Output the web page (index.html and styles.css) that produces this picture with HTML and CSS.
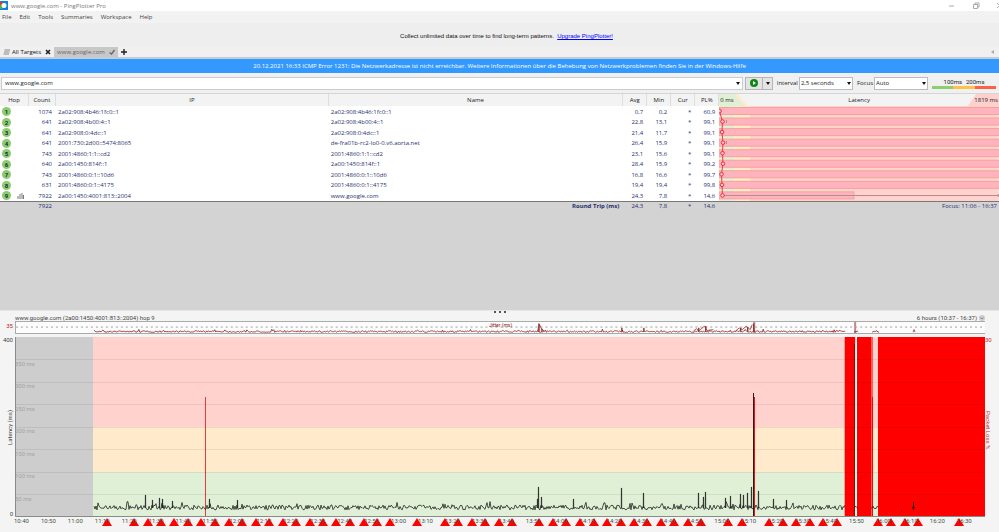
FILE: index.html
```html
<!DOCTYPE html>
<html lang="en">

<head>
	<meta charset="UTF-8">
	<meta name="viewport" content="width=device-width, initial-scale=1.0">
	<title>www.google.com - PingPlotter Pro</title>
	<link rel="stylesheet" href="styles.css">
</head>

<body>
	<header class="titlebar">
		<svg class="app-icon" viewBox="0 0 8 9">
			<rect width="8" height="9" fill="#0f83d8"/>
			<circle cx="1" cy="3" r="2" fill="#e33b2e"/>
			<circle cx="1" cy="6" r="2" fill="#43b649"/>
			<circle cx="4" cy="4.5" r="2.5" fill="#fff"/>
		</svg>
		<span class="window-title">www.google.com - PingPlotter Pro</span>
		<button class="win-btn" aria-label="Minimize"><svg viewBox="0 0 8 8"><path d="M1 4h5"/></svg></button>
		<button class="win-btn" aria-label="Restore"><svg viewBox="0 0 8 8"><path d="M1.5 2.5h4v4h-4zM3 2.5V1h4v4H5.5"/></svg></button>
		<button class="win-btn" aria-label="Close"><svg viewBox="0 0 8 8"><path d="M1 1l5 5M6 1L1 6"/></svg></button>
	</header>

	<nav class="menu">
		<a href="#">File</a>
		<a href="#">Edit</a>
		<a href="#">Tools</a>
		<a href="#">Summaries</a>
		<a href="#">Workspace</a>
		<a href="#">Help</a>
	</nav>

	<div class="promo">Collect unlimited data over time to find long-term patterns.&nbsp; <a href="#">Upgrade PingPlotter!</a></div>

	<div class="tabs">
		<button class="tab">
			<svg class="list-icon" viewBox="0 0 7 6"><path d="M1.5 1H7M1 3h5.5M.5 5H6"/></svg>
			All Targets
			<svg class="tab-mark" viewBox="0 0 6 6"><path d="M1 1l4 4M5 1L1 5"/></svg>
		</button>
		<button class="tab active">
			www.google.com
			<svg class="tab-mark" viewBox="0 0 6 6"><path d="M.5 3.5L2.5 5 5.5 1"/></svg>
		</button>
		<button class="tab-add" aria-label="New tab"><svg viewBox="0 0 6 6"><path d="M3 0v6M0 3h6"/></svg></button>
		<button class="tab-scroll" aria-label="Scroll tabs"><svg viewBox="0 0 3 4"><path d="M3 0v4L0 2z"/></svg></button>
	</div>

	<div class="alert">20.12.2021 16:33 ICMP Error 1231: Die Netzwerkadresse ist nicht erreichbar. Weitere Informationen über die Behebung von Netzwerkproblemen finden Sie in der Windows-Hilfe</div>

	<form class="toolbar">
		<div class="target combo">
			<input type="text" aria-label="Target" value="www.google.com">
		</div>
		<div class="trace-btns">
			<button type="button" class="play" aria-label="Start trace">
				<svg viewBox="0 0 8 8"><circle cx="4" cy="4" r="4" fill="#098a12"/><path d="M3 2l3 2-3 2z" fill="#fff"/></svg>
			</button>
			<button type="button" class="play-more combo" aria-label="Trace options"></button>
		</div>
		<label for="interval">Interval</label>
		<div class="combo">
			<select id="interval">
				<option>2,5 seconds</option>
			</select>
		</div>
		<label for="focus">Focus</label>
		<div class="combo">
			<select id="focus">
				<option>Auto</option>
			</select>
		</div>
		<div class="legend">
			<div class="legend-text"><span>100ms</span><span>200ms</span></div>
			<div class="legend-bar"></div>
		</div>
	</form>

	<main class="trace">
		<table>
			<colgroup>
				<col class="c-hop">
				<col class="c-count">
				<col class="c-ip">
				<col class="c-name">
				<col class="c-num">
				<col class="c-num">
				<col class="c-num">
				<col class="c-num">
				<col class="c-latency">
			</colgroup>
			<thead>
				<tr>
					<th>Hop</th>
					<th>Count</th>
					<th>IP</th>
					<th>Name</th>
					<th>Avg</th>
					<th>Min</th>
					<th>Cur</th>
					<th>PL%</th>
					<th class="latency-head">
						<div class="scale">
							<span class="scale-min">0 ms</span>
							<span>Latency</span>
							<span class="scale-max">1819 ms</span>
						</div>
					</th>
				</tr>
			</thead>
			<tbody>
				<tr>
					<td><span class="hop">1</span></td><td class="num">1074</td><td>2a02:908:4b46:1fc0::1</td><td>2a02:908:4b46:1fc0::1</td>
					<td class="num">0,7</td><td class="num">0,2</td><td class="num">*</td><td class="num">60,9</td>
					<td class="latency" rowspan="9">
						<svg id="hopGraph" viewBox="0 0 280 95" preserveAspectRatio="none"></svg>
					</td>
				</tr>
				<tr>
					<td><span class="hop">2</span></td><td class="num">641</td><td>2a02:908:4b00:4::1</td><td>2a02:908:4b00:4::1</td>
					<td class="num">22,8</td><td class="num">13,1</td><td class="num">*</td><td class="num">99,1</td>
				</tr>
				<tr>
					<td><span class="hop">3</span></td><td class="num">641</td><td>2a02:908:0:4dc::1</td><td>2a02:908:0:4dc::1</td>
					<td class="num">21,4</td><td class="num">11,7</td><td class="num">*</td><td class="num">99,1</td>
				</tr>
				<tr>
					<td><span class="hop">4</span></td><td class="num">641</td><td>2001:730:2d00::5474:8065</td><td>de-fra01b-rc2-lo0-0.v6.aorta.net</td>
					<td class="num">26,4</td><td class="num">15,9</td><td class="num">*</td><td class="num">99,1</td>
				</tr>
				<tr>
					<td><span class="hop">5</span></td><td class="num">743</td><td>2001:4860:1:1::cd2</td><td>2001:4860:1:1::cd2</td>
					<td class="num">23,1</td><td class="num">15,6</td><td class="num">*</td><td class="num">99,1</td>
				</tr>
				<tr>
					<td><span class="hop">6</span></td><td class="num">640</td><td>2a00:1450:814f::1</td><td>2a00:1450:814f::1</td>
					<td class="num">28,4</td><td class="num">15,9</td><td class="num">*</td><td class="num">99,2</td>
				</tr>
				<tr>
					<td><span class="hop">7</span></td><td class="num">743</td><td>2001:4860:0:1::10d6</td><td>2001:4860:0:1::10d6</td>
					<td class="num">16,8</td><td class="num">16,6</td><td class="num">*</td><td class="num">99,7</td>
				</tr>
				<tr>
					<td><span class="hop">8</span></td><td class="num">631</td><td>2001:4860:0:1::4175</td><td>2001:4860:0:1::4175</td>
					<td class="num">19,4</td><td class="num">19,4</td><td class="num">*</td><td class="num">99,8</td>
				</tr>
				<tr>
					<td>
						<div class="hop-cell">
							<span class="hop">9</span>
							<svg class="bars-icon" viewBox="0 0 7 6"><path d="M1 3v3M3 1v5M5 0v6M6.5 2v4"/></svg>
						</div>
					</td>
					<td class="num">7922</td><td>2a00:1450:4001:813::2004</td><td>www.google.com</td>
					<td class="num">24,3</td><td class="num">7,8</td><td class="num">*</td><td class="num">14,6</td>
				</tr>
			</tbody>
			<tfoot>
				<tr>
					<td></td><td class="num">7922</td><td></td><td class="num round-trip">Round Trip (ms)</td>
					<td class="num">24,3</td><td class="num">7,8</td><td class="num">*</td><td class="num">14,6</td>
					<td class="focus-range">Focus: 11:06 - 16:37</td>
				</tr>
			</tfoot>
		</table>
	</main>

	<section class="graph">
		<div class="grip"><i></i><i></i><i></i></div>
		<div class="graph-title">
			<span>www.google.com (2a00:1450:4001:813::2004) hop 9</span>
			<button class="range">6 hours (10:37 - 16:37)
				<svg viewBox="0 0 6 6"><circle cx="3" cy="3" r="3" fill="#ccc"/><path d="M1.5 2.5L3 4l1.5-1.5" fill="none" stroke="#777" stroke-width=".8"/></svg>
			</button>
		</div>
		<div class="jitter-max">35</div>
		<div class="jitter">
			<svg id="jitterGraph" viewBox="0 0 970 13" preserveAspectRatio="none"></svg>
			<span class="jitter-label">Jitter (ms)</span>
		</div>
		<div class="axis axis-left">
			<span>400</span>
			<span class="axis-name">Latency (ms)</span>
			<span>0</span>
		</div>
		<div class="plot">
			<svg id="latencyGraph" viewBox="0 0 970 180" preserveAspectRatio="none"></svg>
			<div class="grid-labels">
				<span></span>
				<span>350 ms</span>
				<span>300 ms</span>
				<span>250 ms</span>
				<span>200 ms</span>
				<span>150 ms</span>
				<span>100 ms</span>
				<span>50 ms</span>
			</div>
		</div>
		<div class="axis axis-right">
			<span>30</span>
			<span class="axis-name">Packet Loss %</span>
			<span></span>
		</div>
		<div class="timeline">
			<svg id="markers" viewBox="0 0 970 10" preserveAspectRatio="none"></svg>
			<div class="times" id="times"></div>
		</div>
	</section>

	<script src="script.js"></script>
</body>

</html>
```

FILE: styles.css
```css
* {
	box-sizing: border-box;
}

body {
	margin: 0;
	height: 100vh;
	display: flex;
	flex-direction: column;
	overflow: hidden;
	font-family: 'Open Sans', 'Noto Sans', sans-serif;
	font-size: 6px;
	line-height: 10px;
	color: #222;
	background: #f0f0f0;
}

button,
input,
select {
	font: inherit;
	color: inherit;
	margin: 0;
	padding: 0;
	border: none;
	border-radius: 0;
	background: none;
	outline: none;
}

svg {
	display: block;
}

/* title bar and menu */
.titlebar {
	display: flex;
	align-items: center;
	height: 11px;
	background: #fff;
	color: #777;
}

.app-icon {
	width: 8px;
	height: 9px;
}

.window-title {
	flex: 1;
	padding-left: 3px;
}

.win-btn {
	width: 8px;
	height: 8px;
	margin-left: 16px;
}

.win-btn:last-child {
	margin-right: -5px;
}

.win-btn svg {
	width: 8px;
	height: 8px;
	fill: none;
	stroke: #aaa;
}

.menu {
	display: flex;
	gap: 8px;
	height: 12px;
	padding: 1px 2px;
	background: #f2f2f2;
}

.menu a {
	color: #444;
	text-decoration: none;
}

.promo {
	height: 23px;
	line-height: 26px;
	padding-left: 14px;
	text-align: center;
	font-family: 'Liberation Sans', Arial, sans-serif;
	color: #111;
	background: #eee;
}

.promo a {
	color: #00f;
}

/* tabs */
.tabs {
	display: flex;
	height: 13px;
	padding-top: 1px;
	border-bottom: 2px solid #c3cbd3;
}

.tab {
	display: flex;
	align-items: center;
	gap: 4px;
	padding: 0 3px;
	color: #111;
}

.tab.active {
	padding: 0 3px;
	color: #666;
	background: #c8c8c8;
}

.list-icon {
	width: 7px;
	height: 6px;
	margin-right: -2px;
	stroke: #888;
}

.tab-mark {
	width: 6px;
	height: 6px;
	fill: none;
	stroke: #222;
	stroke-width: 1.6;
}

.active .tab-mark {
	stroke: #666;
	stroke-width: 1.3;
}

.tab-add {
	padding-left: 3px;
}

.tab-add svg {
	width: 6px;
	height: 6px;
	stroke: #222;
	stroke-width: 1.4;
}

.tab-scroll {
	margin-left: auto;
	padding-right: 5px;
}

.tab-scroll svg {
	width: 3px;
	height: 4px;
	fill: #aaa;
}

.alert {
	height: 14px;
	line-height: 14px;
	text-align: center;
	color: #fff;
	background: #3399ff;
}

/* toolbar */
.toolbar {
	display: flex;
	align-items: center;
	height: 21px;
	padding: 0 3px 0 1px;
	border-bottom: 1px solid #d5d5d5;
}

.combo {
	position: relative;
}

.combo::after {
	content: '';
	position: absolute;
	right: 3px;
	top: 5px;
	border: 2px solid transparent;
	border-top: 3px solid #111;
	border-bottom: none;
	pointer-events: none;
}

.target {
	flex: 1;
}

.target input {
	display: block;
	width: 100%;
	height: 13px;
	padding: 0 3px;
	border: 1px solid #c9cdd2;
	background: #fff;
}

.trace-btns {
	display: flex;
	margin: 0 4px 0 2px;
	border: 1px solid #b5b5b5;
	background: #e4e4e4;
}

.play {
	width: 16px;
	height: 11px;
	padding: 0 4px;
}

.play svg {
	width: 8px;
	height: 8px;
}

.play-more {
	width: 10px;
	border-left: 1px solid #b5b5b5;
}

.play-more::after {
	right: 2px;
	top: 4px;
}

.toolbar select {
	display: block;
	appearance: none;
	width: 54px;
	height: 13px;
	margin: 0 4px 0 1px;
	padding: 0 1px;
	border: 1px solid #b9bdc2;
	background: #fff;
}

.toolbar label + .combo::after {
	right: 6px;
}

.legend {
	width: 64px;
	font-family: Roboto, sans-serif;
}

.legend-text {
	display: flex;
	justify-content: center;
	gap: 4px;
	line-height: 8px;
}

.legend-bar {
	height: 3px;
	background: linear-gradient(to right, #8ccf6e 33%, #ffc04c 33% 67%, #ff604c 67%);
}

/* trace table */
.trace {
	flex: 1 1 216px;
	min-height: 0;
	background: #d3d3d3;
}

table {
	width: 100%;
	table-layout: fixed;
	border-collapse: separate;
	border-spacing: 0;
}

.c-hop {
	width: 29px;
}

.c-count {
	width: 27px;
}

.c-ip {
	width: 27.3%;
}

.c-num {
	width: 24px;
}

.c-latency {
	width: 28%;
}

th,
td {
	padding: 0 2px;
	white-space: nowrap;
}

th {
	height: 12px;
	font-weight: normal;
	border-right: 1px solid #ddd;
	background: #f3f3f3;
}

th.latency-head {
	padding: 0;
	border: none;
}

.scale {
	display: flex;
	justify-content: space-between;
	line-height: 12px;
}

.scale-min {
	width: 31px;
	padding-left: 1px;
	text-align: left;
	background: linear-gradient(50deg, #dff0d6 62%, #ffeacc 62% 70%, transparent 70%);
}

.scale-max {
	width: 31px;
	padding-right: 1px;
	text-align: right;
	background: #ffd0cd;
	clip-path: polygon(8px 0, 100% 0, 100% 100%, 0 100%);
}

tbody {
	color: #1f2f70;
	background: #fff;
}

tbody tr {
	height: 11px;
}

tbody tr:nth-child(even) {
	height: 10px;
}

.num {
	text-align: right;
	padding-right: 4px;
}

.hop-cell {
	display: flex;
	align-items: center;
	gap: 6px;
}

.hop {
	display: block;
	width: 9px;
	height: 9px;
	line-height: 9px;
	border-radius: 50%;
	text-align: center;
	font-family: Roboto, sans-serif;
	font-weight: bold;
	color: #0c2c4c;
	background: #8ccb6c;
}

.bars-icon {
	width: 7px;
	height: 6px;
	stroke: #777;
}

td.latency {
	padding: 0;
}

.latency svg {
	width: 100%;
	height: 95px;
}

tfoot td {
	line-height: 8px;
	border-top: 1px solid #777;
	color: #1f2f70;
}

.round-trip {
	font-weight: bold;
}

tfoot .focus-range {
	text-align: right;
}

/* timeline graph */
.graph {
	flex: 1 1 222px;
	min-height: 0;
	display: grid;
	grid-template-columns: 15px 1fr 14px;
	grid-template-rows: 4px 6px 16px 1fr 10px;
	padding-bottom: 5px;
	border-top: 1px solid #e6e6e6;
	font-family: Roboto, sans-serif;
	background: #f4f4f4;
}

.grip {
	grid-column: 1 / -1;
	display: flex;
	justify-content: center;
	gap: 3px;
}

.grip i {
	width: 2px;
	height: 2px;
	background: #555;
}

.graph-title {
	grid-column: 2;
	display: flex;
	justify-content: space-between;
	line-height: 6px;
	color: #444;
}

.range {
	display: flex;
	gap: 2px;
}

.range svg {
	width: 6px;
	height: 6px;
}

.jitter-max {
	grid-column: 1;
	padding-right: 2px;
	text-align: right;
	color: #b02a2a;
}

.jitter {
	position: relative;
	height: 13px;
	border: 1px solid #aaa;
	border-right: none;
	background: #fcfcfc;
}

.jitter svg {
	width: 100%;
	height: 100%;
}

.jitter-label {
	position: absolute;
	top: -2px;
	left: 0;
	right: 0;
	text-align: center;
	font-size: 5px;
	color: #8e2222;
}

.axis {
	display: flex;
	flex-direction: column;
	justify-content: space-between;
	line-height: 6px;
	color: #444;
}

.axis-left {
	grid-column: 1;
	align-items: flex-end;
	padding-right: 2px;
}

.axis-name {
	writing-mode: vertical-rl;
	white-space: nowrap;
}

.axis-left .axis-name {
	transform: rotate(180deg);
}

.axis-right {
	align-items: flex-start;
	color: #c03030;
}

.plot {
	position: relative;
	min-height: 0;
}

.plot svg {
	width: 100%;
	height: 100%;
}

.grid-labels {
	position: absolute;
	inset: 0;
	display: flex;
	flex-direction: column;
	color: #a4a4a4;
}

.grid-labels span {
	flex: 1;
	line-height: 8px;
}

.timeline {
	grid-column: 2;
	position: relative;
}

.timeline svg {
	width: 100%;
	height: 10px;
}

.times {
	position: absolute;
	top: -1px;
	left: -7px;
	right: 7px;
	display: flex;
	line-height: 10px;
	color: #46543f;
}

.times span {
	flex: 1;
	text-align: center;
}
```

FILE: script.js
```js
const NS = 'http://www.w3.org/2000/svg';

function draw(parent, tag, attrs) {
	const el = document.createElementNS(NS, tag);
	for (const key in attrs) {
		el.setAttribute(key, attrs[key]);
	}
	parent.appendChild(el);
	return el;
}

function rect(parent, x, y, width, height, fill) {
	return draw(parent, 'rect', { x, y, width, height, fill });
}

let seed = 7;
function random() {
	seed = (seed * 16807) % 2147483647;
	return seed / 2147483647;
}

// noisy series between two x positions, spikes are [x, y]
function series(from, to, base, noise, spikes) {
	let points = [];
	for (let x = from; x <= to; x += 1) {
		let r = random();
		let y = base + (r - 0.6) * noise;
		if (random() > 0.92) {
			y -= noise * random();
		}
		points.push([x, y]);
	}
	spikes.forEach(([x, y]) => {
		if (x > from && x < to) {
			points.push([x + 0.3, base], [x + 0.4, y], [x + 0.6, y], [x + 0.7, base]);
		}
	});
	points.sort((a, b) => a[0] - b[0]);
	return points.map(p => p.join(',')).join(' ');
}

/* hop latency bars */
const hops = document.getElementById('hopGraph');
rect(hops, 0, 0, 15, 95, '#dff0d6');
rect(hops, 15, 0, 16, 95, '#ffeacc');
rect(hops, 31, 0, 249, 95, '#ffd2ce');
const avg = [0.5, 3.5, 3, 4, 3.5, 4, 2.5, 3, 3.5];
const step = 10.55;
avg.forEach((x, i) => {
	const width = i === 8 ? 135 : 281;
	draw(hops, 'rect', { x: 0, y: 1.5 + i * step, width, height: 7, fill: '#ffb3be', stroke: '#f4a397', 'stroke-width': 1 });
});
draw(hops, 'path', { d: 'M4 89.5H280M279.5 88v3M7.5 14v3M7.5 35v3', stroke: '#b58a90', fill: 'none' });
draw(hops, 'polyline', { points: avg.map((x, i) => x + ',' + (5 + i * step)).join(' '), fill: 'none', stroke: '#f03a45' });
avg.forEach((x, i) => {
	draw(hops, 'circle', { cx: x, cy: 5 + i * step, r: 1.8, fill: '#ffc4cb', stroke: '#e8303c' });
});

/* jitter */
const jitter = document.getElementById('jitterGraph');
draw(jitter, 'path', { d: 'M0 6H970', stroke: '#999', 'stroke-dasharray': '2 3' });
rect(jitter, 738, 0, 2, 13, '#c08a8a');
rect(jitter, 839, 0, 2, 13, '#c08a8a');
const jitterSpikes = [[523, 2], [526, 8], [606, 7], [628, 7], [683, 7], [690, 5], [725, 7], [732, 6], [738, 2]];
[[78, 830], [839, 843], [857, 864]].forEach(([from, to]) => {
	draw(jitter, 'polyline', { points: series(from, to, 11.5, 2, jitterSpikes), fill: 'none', stroke: '#8e2222', 'stroke-width': 0.9 });
});
draw(jitter, 'path', { d: 'M678 11l3-3 3 2 5-5 3 5 6-1M720 11l4-4 3 2 4-4 4 4 2-6M522 11l2-8 2 5 3 3M898 12l1-3 1 3', fill: 'none', stroke: '#8e2222', 'stroke-width': 0.8 });

/* latency plot */
const plot = document.getElementById('latencyGraph');
rect(plot, 0, 0, 970, 90, '#ffd2ce');
rect(plot, 0, 90, 970, 45, '#ffeacc');
rect(plot, 0, 135, 970, 45, '#dff0d6');
rect(plot, 0, 0, 78, 180, '#cdcdcd');

// packet loss
rect(plot, 829, 0, 1, 180, '#ff9a94');
rect(plot, 830, 0, 10, 180, '#f00');
rect(plot, 841, 0, 1, 180, '#fff');
rect(plot, 842, 0, 14, 180, '#f00');
rect(plot, 856, 0, 2, 180, '#ff5a55');
rect(plot, 857, 60, 1, 120, '#f00');
rect(plot, 863, 0, 107, 180, '#f00');
rect(plot, 190, 60, 1, 120, '#f03838');
rect(plot, 739, 60, 1, 120, '#e01818');

for (let y = 22.5; y < 180; y += 22.5) {
	rect(plot, 0, Math.floor(y), 970, 1, 'rgba(0, 0, 0, 0.07)');
}

rect(plot, 738, 56, 1, 124, '#3a1414');
rect(plot, 839, 7, 1, 173, '#5a2020');

const spikes = [
	[130, 158], [137, 163], [144, 161], [147, 162], [157, 164], [194, 162], [222, 163],
	[522, 162], [523, 150], [526, 160], [558, 162], [606, 151], [628, 156],
	[683, 156], [688, 160], [690, 155], [710, 161], [715, 159], [725, 157],
	[728, 158], [732, 156], [736, 150], [743, 154], [758, 162], [771, 163]
];
[[79, 830], [839, 843], [856, 863]].forEach(([from, to]) => {
	draw(plot, 'polyline', { points: series(from, to, 171, 5, spikes), fill: 'none', stroke: '#222', 'stroke-width': 0.8 });
});
draw(plot, 'path', { d: 'M898.5 165v8M897.5 170l1 2 1-2M886 174h1', fill: 'none', stroke: '#300' });
draw(plot, 'path', { d: 'M.5 0V179.5H970', fill: 'none', stroke: '#8a8a8a' });

/* route change markers */
const markers = document.getElementById('markers');
[
	92, 119, 133, 146, 159, 173, 186, 200, 214, 227, 241, 254, 268, 281, 295, 308,
	321, 335, 349, 362, 375, 402, 430, 443, 457, 470, 484, 497, 524, 538, 551, 565,
	579, 592, 606, 619, 632, 646, 659, 673, 686, 713, 727, 754, 768, 781, 795, 808,
	822, 863, 876, 890, 903, 944
].forEach(x => {
	draw(markers, 'path', { d: `M${x} 1l5 8h-10z`, fill: '#f00' });
});

const times = document.getElementById('times');
for (let i = 0; i < 36; i++) {
	const minutes = 640 + i * 10;
	const label = document.createElement('span');
	label.textContent = Math.floor(minutes / 60) + ':' + String(minutes % 60).padStart(2, '0');
	times.appendChild(label);
}
```
